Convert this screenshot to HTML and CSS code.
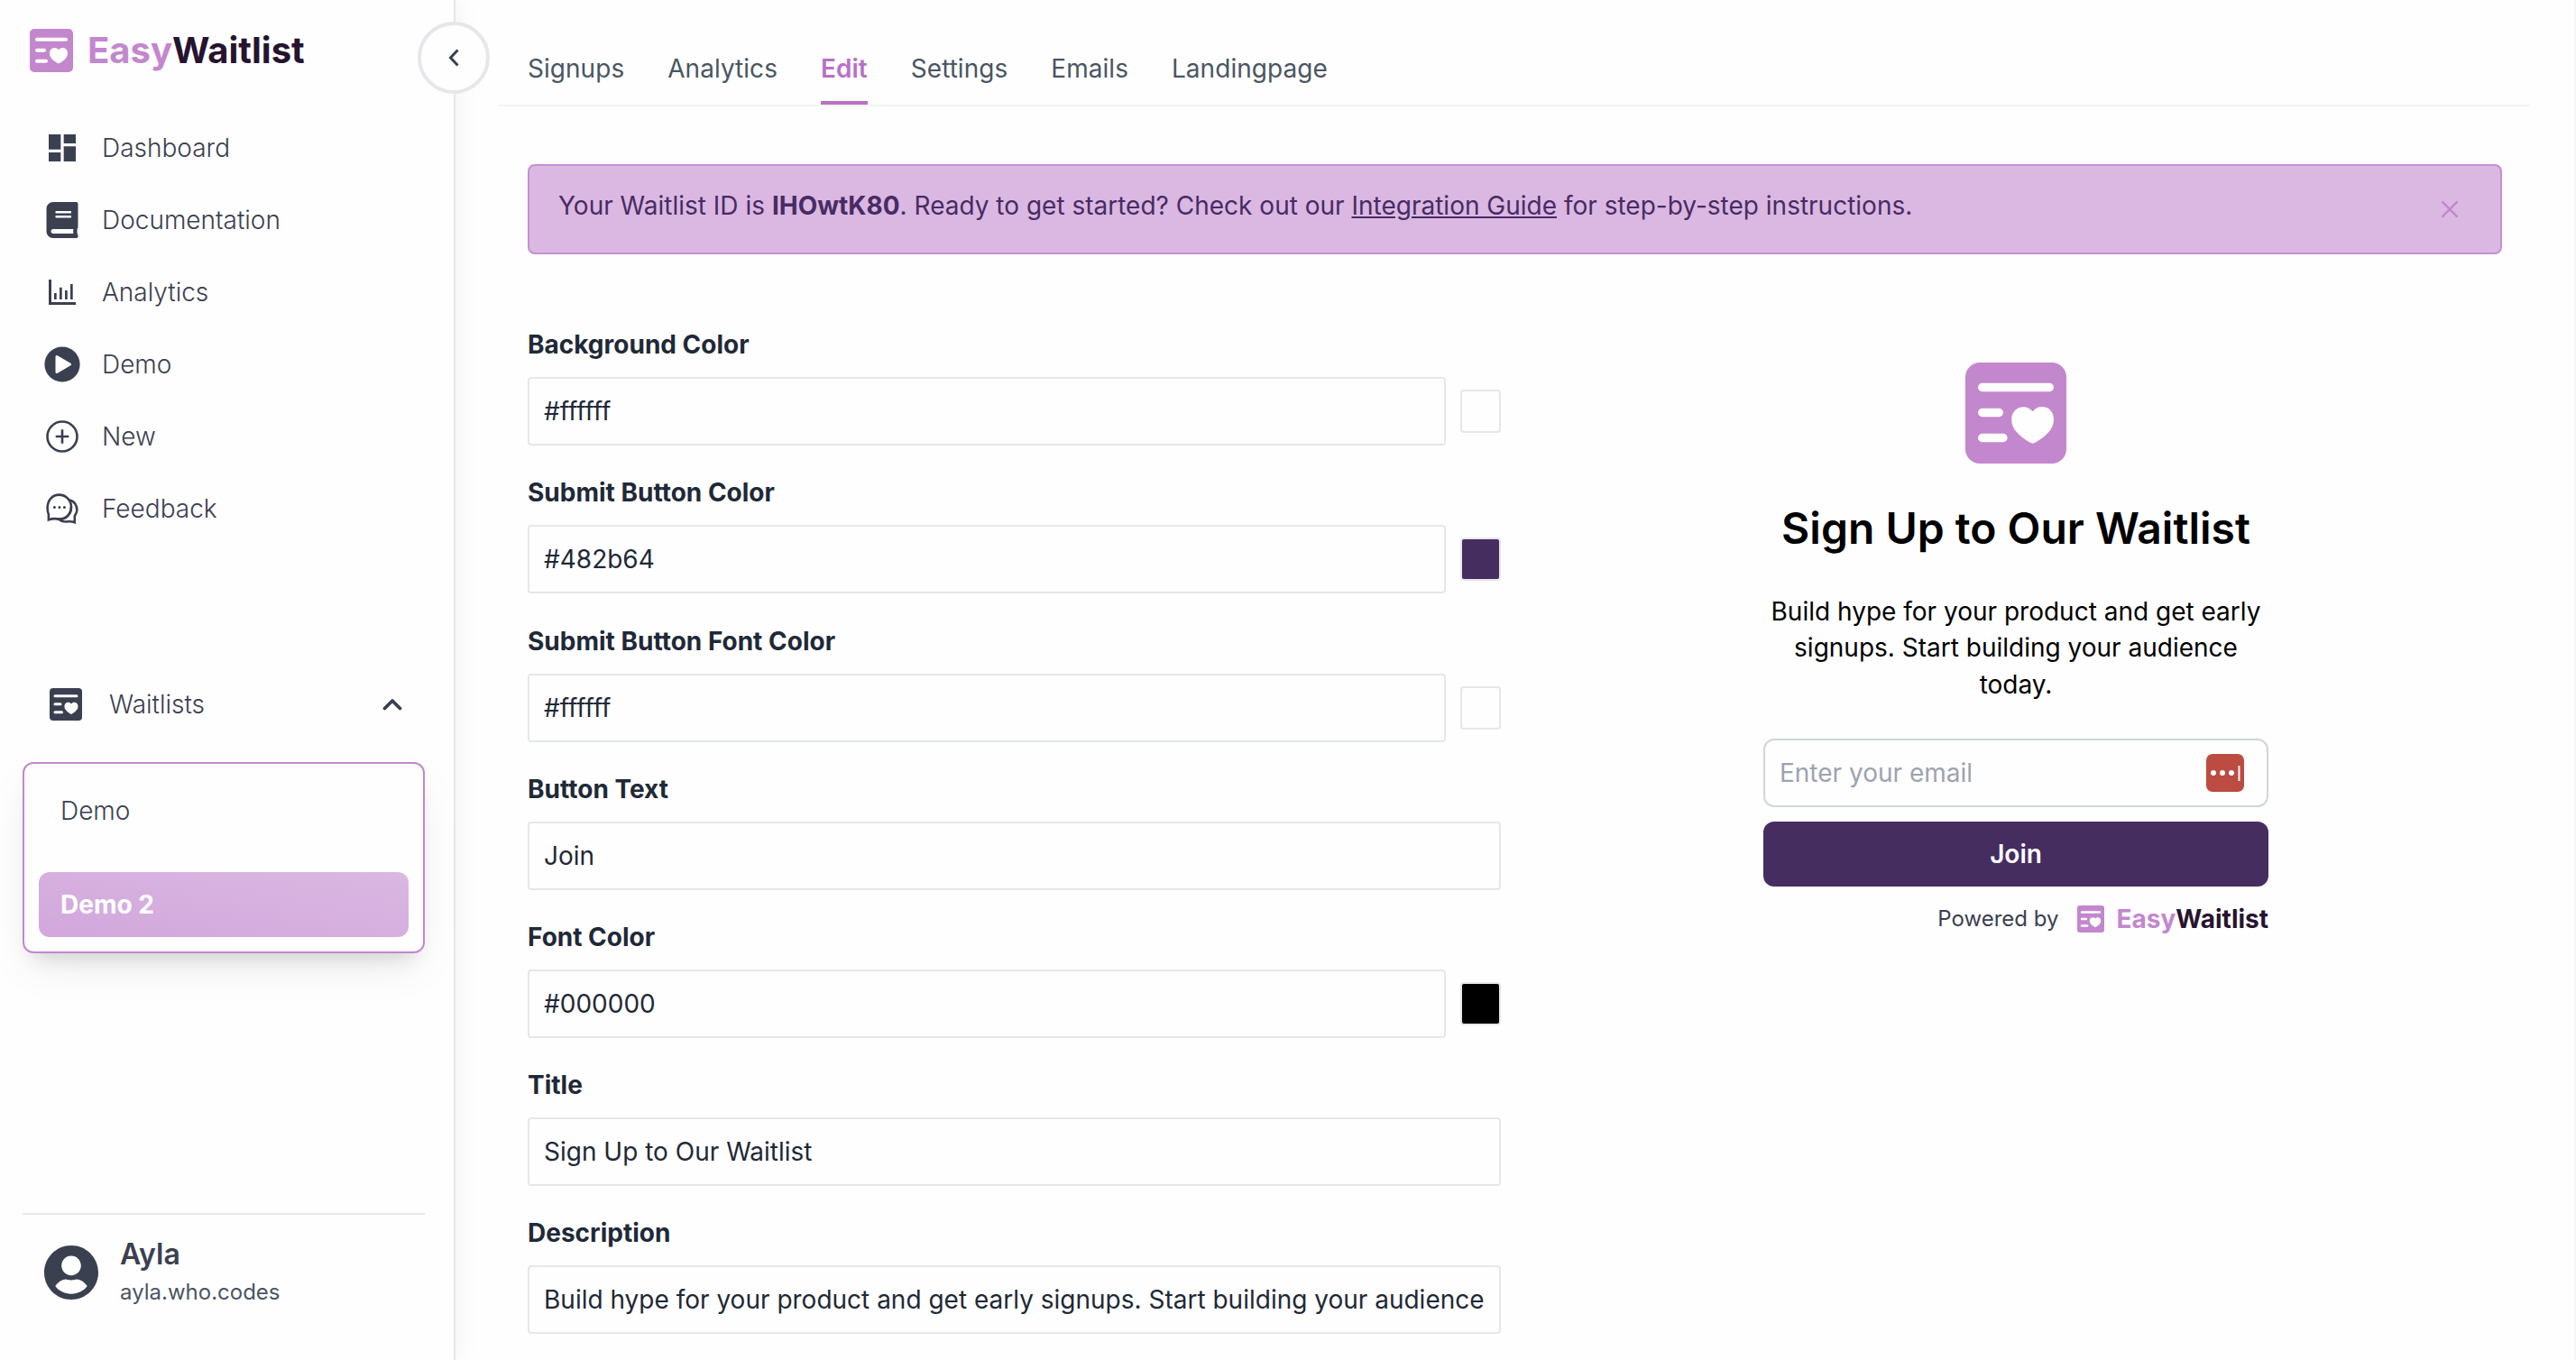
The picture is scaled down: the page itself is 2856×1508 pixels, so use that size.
FILE: index.html
```html
<!DOCTYPE html>
<html lang="en">
<head>
  <meta charset="UTF-8">
  <meta name="viewport" content="width=device-width, initial-scale=1.0">
  <title>EasyWaitlist - Edit</title>
  <link rel="stylesheet" href="styles.css">
</head>
<body>

  <!-- Shared logo mark -->
  <svg width="0" height="0" class="defs">
    <symbol id="mark" viewBox="0 0 24 24">
      <path fill="none" stroke="#fefefe" stroke-width="2" stroke-linecap="round" d="M4 5.9h16M4 11.9h4M4 17.9h5"/>
      <path fill="#fefefe" d="M16 11.65C15.3 10.9 14.7 10.55 13.8 10.55C12.1 10.55 10.95 11.9 10.95 13.55C10.95 15.9 13 17.6 15.3 18.95Q16 19.4 16.7 18.95C19 17.6 21 15.9 21 13.55C21 11.8 19.9 10.5 18.2 10.5C17.3 10.5 16.6 10.9 16 11.65Z"/>
    </symbol>
  </svg>

  <div class="app">
    <aside class="sidebar">
      <button class="toggle" type="button" aria-label="Collapse">
        <svg width="12" height="20" viewBox="0 0 12 20"><path fill="none" stroke="currentColor" stroke-width="3" d="M10.5 1.5L2.5 10l8 8.5"/></svg>
      </button>

      <div class="brand">
        <svg class="mark mark-brand"><use href="#mark"/></svg>
        <span class="brand-name"><span class="easy">Easy</span>Waitlist</span>
      </div>

      <nav class="menu">
        <a class="menu-item">
          <svg viewBox="0 0 24 24"><path d="M3 13h8V3H3v10zm0 8h8v-6H3v6zm10 0h8V11h-8v10zm0-18v6h8V3h-8z"/></svg>
          <span>Dashboard</span>
        </a>
        <a class="menu-item">
          <svg viewBox="-32 0 512 512"><path d="M448 360V24c0-13.300-10.700-24-24-24H96C43 0 0 43 0 96v320c0 53 43 96 96 96h328c13.300 0 24-10.700 24-24v-16c0-7.500-3.500-14.300-8.900-18.700-4.200-15.400-4.200-59.300 0-74.700 5.400-4.300 8.900-11.100 8.900-18.600zM128 134c0-3.300 2.700-6 6-6h212c3.300 0 6 2.700 6 6v20c0 3.300-2.700 6-6 6H134c-3.300 0-6-2.700-6-6v-20zm0 64c0-3.300 2.700-6 6-6h212c3.300 0 6 2.700 6 6v20c0 3.300-2.700 6-6 6H134c-3.300 0-6-2.700-6-6v-20zm253.400 250H96c-17.700 0-32-14.300-32-32 0-17.600 14.400-32 32-32h285.400c-1.900 17.100-1.900 46.900 0 64z"/></svg>
          <span>Documentation</span>
        </a>
        <a class="menu-item">
          <svg viewBox="0 0 40 40"><path d="M5 6h3v25h27v3H5zM11 21h2.700v7H11zM17 14.700h2.700V28H17zM23 18h2.700v10H23zM29 11h2.700v17H29z"/></svg>
          <span>Analytics</span>
        </a>
        <a class="menu-item">
          <svg viewBox="0 0 40 40"><circle cx="20" cy="20" r="19.600"/><path fill="#fefefe" stroke="#fefefe" stroke-width="3" stroke-linejoin="round" d="M14 11.500v17L28.500 20z"/></svg>
          <span>Demo</span>
        </a>
        <a class="menu-item">
          <svg class="line" viewBox="0 0 40 40"><circle cx="20" cy="20" r="16.500"/><path d="M20 12.300v15.400M12.700 20h14.600"/></svg>
          <span>New</span>
        </a>
        <a class="menu-item">
          <svg class="line" viewBox="0 0 40 40">
            <path d="M4.900 32.400V26.500C3.900 24.200 3.600 22 3.600 18.500C4 10 9.500 4.600 16.500 4.600C24 4.600 30 10.700 30 18.300C30 26 24 31.700 17 31.700C13 31.700 12 29.800 4.900 32.400Z"/>
            <path d="M27.500 10.200C33.500 11.500 36.600 16.500 36.300 22C36.200 25 34.200 26.500 33.800 28.500V35.200C28 33 27 35 22 34.300C19.500 34 17.500 33 15.500 31.500C23 32 29.700 28 29.900 18"/>
            <path stroke-linecap="round" stroke-width="3" d="M11.400 18.600h.01M16.900 18.600h.01M22.400 18.600h.01"/>
          </svg>
          <span>Feedback</span>
        </a>
      </nav>

      <div class="waitlists-head">
        <svg class="mark mark-menu"><use href="#mark"/></svg>
        <span>Waitlists</span>
        <svg class="caret" width="22" height="14" viewBox="0 0 22 14"><path fill="none" stroke="currentColor" stroke-width="3.800" stroke-linecap="round" stroke-linejoin="round" d="M2.500 11.500L11 3l8.500 8.500"/></svg>
      </div>

      <div class="waitlists">
        <a class="waitlist">Demo</a>
        <a class="waitlist active">Demo 2</a>
      </div>

      <div class="user">
        <svg width="60" height="60" viewBox="2 2 20 20"><path d="M12 2C6.480 2 2 6.480 2 12s4.480 10 10 10 10-4.480 10-10S17.520 2 12 2zm0 3.800c1.990 0 3.600 1.620 3.600 3.650S13.990 13.100 12 13.100s-3.600-1.620-3.600-3.650S10.010 5.800 12 5.800zm0 14.100c-2.500 0-4.600-1.100-5.900-2.900 1-1.500 2.600-2.500 3.900-2.500.5.100 1.200.3 2 .3s1.500-.2 2-.3c1.300 0 2.900 1 3.900 2.500-1.300 1.800-3.400 2.900-5.900 2.900z"/></svg>
        <div class="user-text">
          <div class="user-name">Ayla</div>
          <div class="user-site">ayla.who.codes</div>
        </div>
      </div>
    </aside>

    <main class="main">
      <div class="tabs">
        <a class="tab">Signups</a>
        <a class="tab">Analytics</a>
        <a class="tab active">Edit</a>
        <a class="tab">Settings</a>
        <a class="tab">Emails</a>
        <a class="tab">Landingpage</a>
      </div>

      <div class="alert">
        <p>Your Waitlist ID is <b>IHOwtK80</b>. Ready to get started? Check out our <a class="guide">Integration Guide</a> for step-by-step instructions.</p>
        <svg class="close" width="20" height="20" viewBox="0 0 20 20"><path fill="none" stroke="currentColor" stroke-width="2.500" stroke-linecap="round" d="M2.200 2.200l15.600 15.600M17.800 2.200L2.200 17.800"/></svg>
      </div>

      <div class="content">
        <form class="form">
          <div class="field">
            <label for="bg">Background Color</label>
            <div class="row">
              <input type="text" id="bg" value="#ffffff">
              <span class="swatch white"></span>
            </div>
          </div>
          <div class="field">
            <label for="btnColor">Submit Button Color</label>
            <div class="row">
              <input type="text" id="btnColor" value="#482b64">
              <span class="swatch purple"></span>
            </div>
          </div>
          <div class="field">
            <label for="btnFont">Submit Button Font Color</label>
            <div class="row">
              <input type="text" id="btnFont" value="#ffffff">
              <span class="swatch white"></span>
            </div>
          </div>
          <div class="field">
            <label for="btnText">Button Text</label>
            <div class="row"><input type="text" id="btnText" value="Join"></div>
          </div>
          <div class="field">
            <label for="fontColor">Font Color</label>
            <div class="row">
              <input type="text" id="fontColor" value="#000000">
              <span class="swatch black"></span>
            </div>
          </div>
          <div class="field">
            <label for="title">Title</label>
            <div class="row"><input type="text" id="title" value="Sign Up to Our Waitlist"></div>
          </div>
          <div class="field">
            <label for="description">Description</label>
            <div class="row"><input type="text" id="description" value="Build hype for your product and get early signups. Start building your audience"></div>
          </div>
        </form>

        <section class="preview">
          <svg class="mark mark-big"><use href="#mark"/></svg>
          <h1>Sign Up to Our Waitlist</h1>
          <p class="preview-text">Build hype for your product and get early signups. Start building your audience today.</p>
          <div class="email">
            <input type="email" placeholder="Enter your email">
            <svg class="pass" width="42" height="42" viewBox="0 0 42 42">
              <rect width="42" height="42" rx="7" fill="#bc4b41"/>
              <path fill="#fff" d="M35.500 13h2v17h-2z"/>
              <circle cx="8" cy="21" r="3" fill="#fff"/><circle cx="18" cy="21" r="3" fill="#fff"/><circle cx="28" cy="21" r="3" fill="#fff"/>
            </svg>
          </div>
          <button class="join" type="button">Join</button>
          <div class="powered">
            <span>Powered by</span>
            <svg class="mark mark-small"><use href="#mark"/></svg>
            <span class="powered-name"><span class="easy">Easy</span>Waitlist</span>
          </div>
        </section>
      </div>
    </main>
  </div>

</body>
</html>
```

FILE: styles.css
```css
* {
  box-sizing: border-box;
}

body {
  margin: 0;
  font-family: Inter, sans-serif;
  font-size: 28px;
  line-height: 40px;
  color: #1f2937;
  background-color: #fefefe;
  overflow: hidden;
}

.defs {
  position: absolute;
}

.app {
  display: flex;
  height: 1508px;
  border-right: 2px solid #f6f7f9;
}

/* Logo mark */
.mark {
  flex: none;
  background-color: #c387ce;
}

.mark-brand {
  width: 48px;
  height: 48px;
  border-radius: 5px;
}

.mark-menu {
  width: 36px;
  height: 36px;
  border-radius: 4px;
  background-color: #3b4050;
}

.mark-big {
  width: 112px;
  height: 112px;
  border-radius: 16px;
}

.mark-small {
  width: 30px;
  height: 30px;
  border-radius: 3px;
}

.easy {
  color: #c387ce;
}

/* Sidebar */
.sidebar {
  position: relative;
  flex: none;
  display: flex;
  flex-direction: column;
  width: 505px;
  padding: 32px 32px 59px 25px;
  border-right: 2px solid #e5e7eb;
  box-shadow: 4px 0 24px rgba(0, 0, 0, 0.05);
  color: #3b4050;
}

.toggle {
  position: absolute;
  top: 24px;
  right: -40px;
  display: flex;
  align-items: center;
  justify-content: center;
  width: 80px;
  height: 80px;
  padding: 0;
  border: 4px solid #e5e7eb;
  border-radius: 50%;
  background-color: #fefefe;
  color: #3b4050;
}

.brand {
  display: flex;
  align-items: center;
  gap: 16px;
  padding-left: 8px;
  height: 48px;
}

.brand-name {
  font-size: 40px;
  font-weight: 700;
  color: #26142f;
}

.menu {
  display: flex;
  flex-direction: column;
  gap: 40px;
  margin-top: 64px;
  padding-left: 24px;
}

.menu-item {
  display: flex;
  align-items: center;
  gap: 24px;
  height: 40px;
  font-weight: 300;
}

.menu-item svg {
  width: 40px;
  height: 40px;
  fill: #3b4050;
}

.menu-item svg.line {
  fill: none;
  stroke: #3b4050;
  stroke-width: 2.6;
}

.waitlists-head {
  display: flex;
  align-items: center;
  margin-top: 177px;
  padding: 0 25px 0 30px;
  height: 40px;
  font-weight: 300;
}

.waitlists-head span {
  margin-left: 30px;
}

.caret {
  margin-left: auto;
}

.waitlists {
  display: flex;
  flex-direction: column;
  gap: 32px;
  margin-top: 44px;
  padding: 16px;
  border: 2px solid #c387ce;
  border-radius: 12px;
  box-shadow: 0 20px 50px -10px rgba(0, 0, 0, 0.1), 0 16px 20px -12px rgba(0, 0, 0, 0.12);
}

.waitlist {
  height: 72px;
  padding: 0 24px;
  border-radius: 12px;
  line-height: 72px;
  font-weight: 300;
}

.waitlist.active {
  background: linear-gradient(to top right, #d2a7dc, #dab8e2);
  color: #fff;
  font-weight: 700;
}

.user {
  display: flex;
  align-items: center;
  gap: 24px;
  margin-top: auto;
  padding: 26px 0 0 24px;
  border-top: 2px solid #e5e7eb;
}

.user svg {
  fill: #3b4050;
}

.user-name {
  font-size: 32px;
  font-weight: 600;
  line-height: 36px;
}

.user-site {
  margin-top: 8px;
  font-size: 24px;
  line-height: 32px;
  color: #4b5563;
}

/* Main */
.main {
  flex: 1;
  padding: 0 49px 0 48px;
}

.tabs {
  display: flex;
  gap: 48px;
  height: 118px;
  padding: 56px 32px 0;
  border-bottom: 2px solid #f3f4f6;
  color: #4b5563;
  letter-spacing: 0.04px;
}

.tab {
  height: 60px;
}

.tab.active {
  color: #b970c6;
  font-weight: 600;
  border-bottom: 4px solid #b970c6;
}

.alert {
  display: flex;
  justify-content: space-between;
  height: 100px;
  margin: 64px 31px 0 32px;
  padding: 24px 46px 24px 32px;
  border: 2px solid #c68fd2;
  border-radius: 8px;
  background-color: #dab8e2;
  color: #482b64;
}

.alert p {
  margin: 0;
}

.alert b {
  font-weight: 700;
}

.guide {
  text-decoration: underline;
}

.close {
  margin-top: 14px;
  color: #c387ce;
}

.content {
  display: flex;
  margin-left: 32px;
}

.form {
  width: 1079px;
  padding-top: 80.15px;
}

.field {
  height: 164.2px;
}

.field label {
  display: block;
  height: 56px;
  line-height: 40px;
  font-weight: 700;
}

.row {
  display: flex;
  align-items: center;
  gap: 16px;
}

input {
  flex: 1;
  min-width: 0;
  height: 76px;
  padding: 0 16px;
  border: 2px solid #e5e7eb;
  border-radius: 4px;
  background-color: #fefefe;
  color: #1f2937;
  font: inherit;
}

.swatch {
  width: 45px;
  height: 48px;
  border: 2px solid #e5e7eb;
  border-radius: 4px;
}

.purple {
  background-color: #452d60;
}

.black {
  background-color: #000;
}

/* Widget preview */
.preview {
  display: flex;
  flex-direction: column;
  align-items: center;
  width: 560px;
  margin-left: 291px;
  padding-top: 120px;
  color: #000;
}

.preview h1 {
  margin: 44px 0 0;
  font-size: 48px;
  font-weight: 600;
  line-height: 56px;
  white-space: nowrap;
}

.preview-text {
  margin: 44px 0 0;
  text-align: center;
  line-height: 40.4px;
}

.email {
  display: flex;
  align-items: center;
  width: 560px;
  height: 76px;
  margin-top: 39.8px;
  padding: 0 25px 0 16px;
  border: 2px solid #d1d5db;
  border-radius: 12px;
}

.email input {
  height: 60px;
  padding: 0;
  border: none;
}

.email input::placeholder {
  color: #9ca3af;
}

.join {
  width: 560px;
  height: 72px;
  margin-top: 16px;
  border: none;
  border-radius: 12px;
  background-color: #452d60;
  color: #fff;
  font: 600 28px/40px Inter, sans-serif;
}

.powered {
  display: flex;
  align-items: center;
  align-self: flex-end;
  margin-top: 16px;
  font-size: 24px;
  color: #3b4050;
}

.powered .mark {
  margin: 0 13px 0 21px;
}

.powered-name {
  font-size: 28px;
  font-weight: 700;
  color: #26142f;
}
```
